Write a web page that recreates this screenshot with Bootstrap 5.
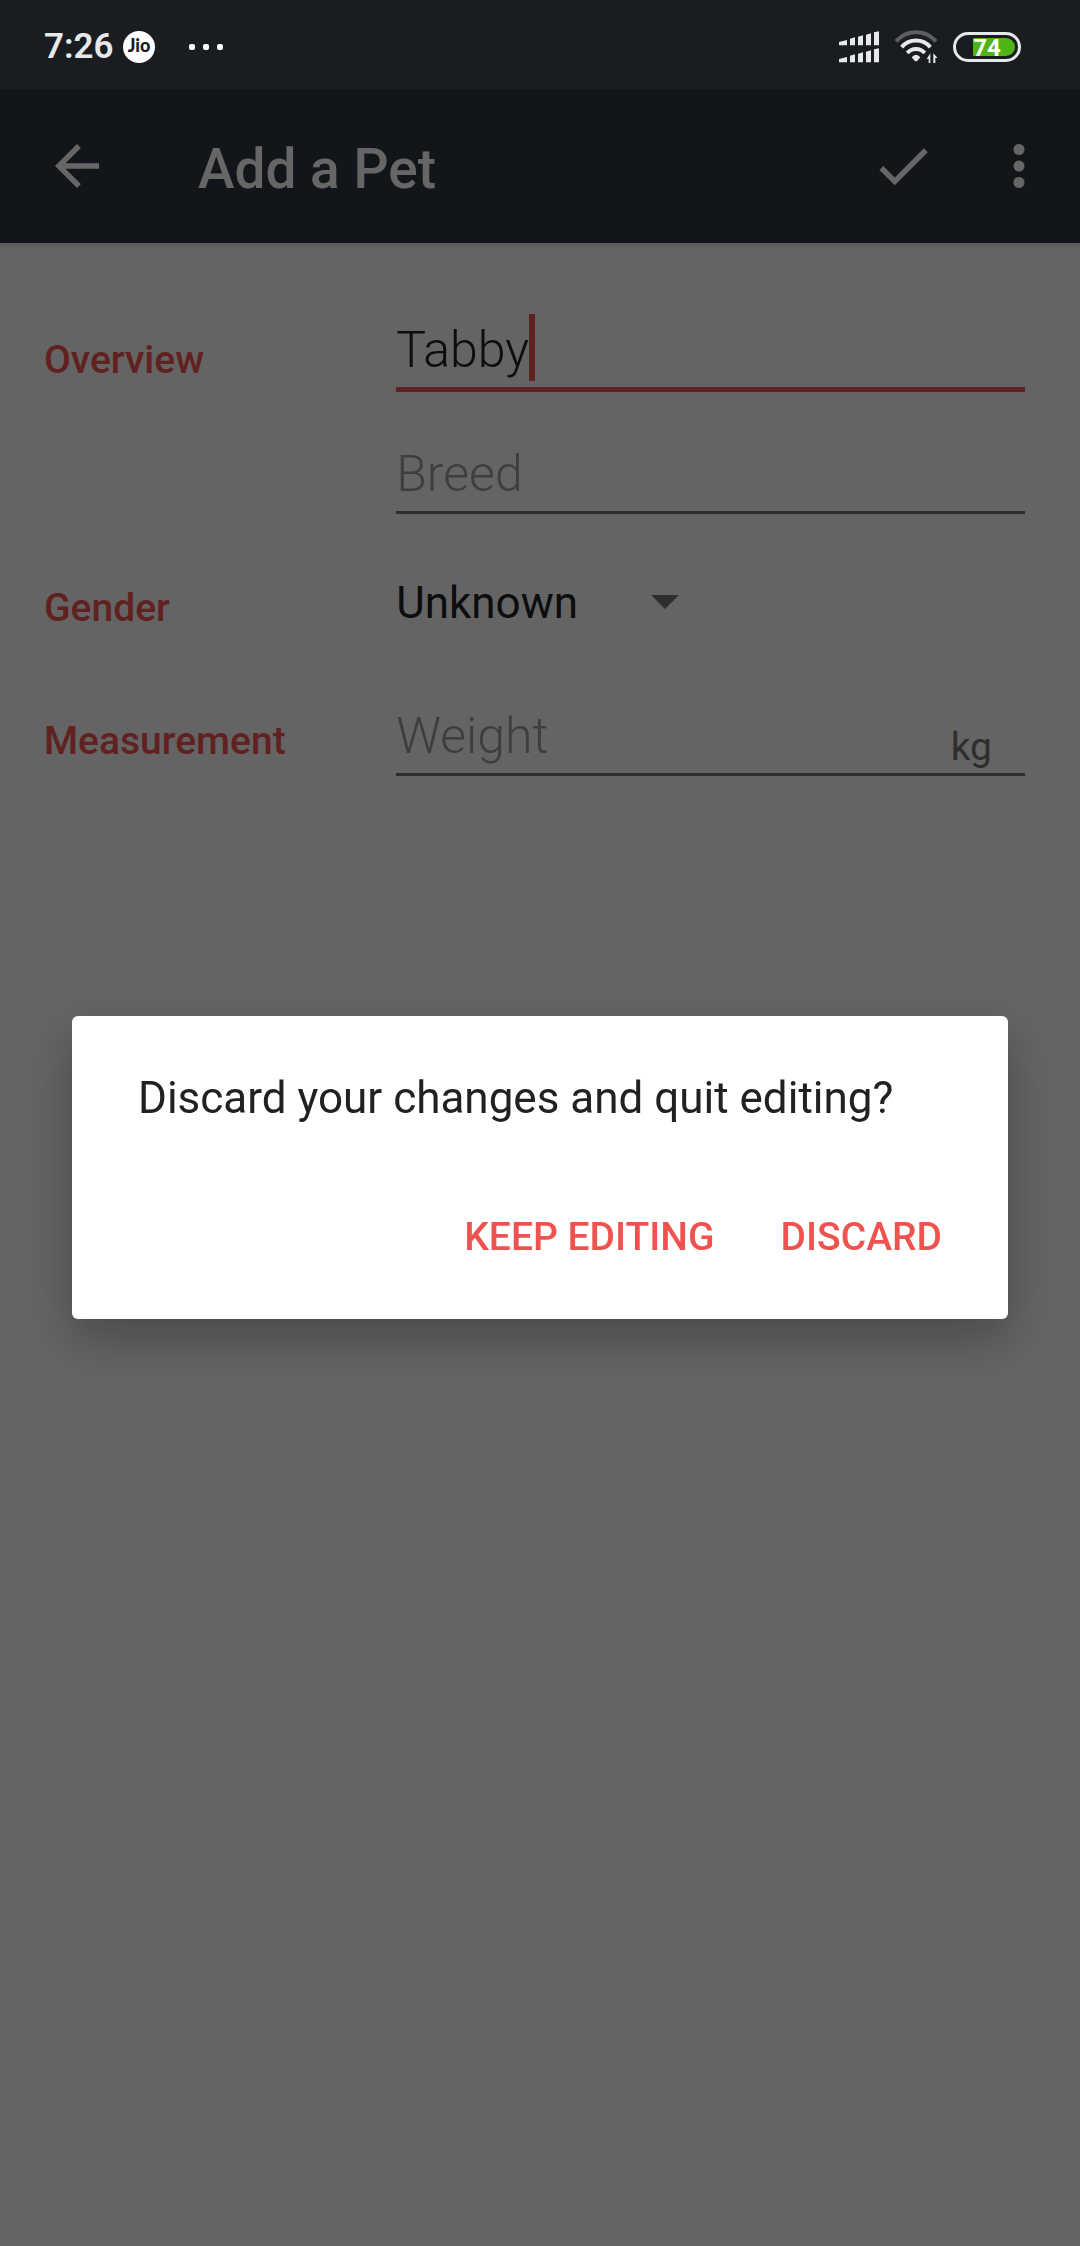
<!DOCTYPE html>
<html lang="en">
<head>
<meta charset="utf-8">
<meta name="viewport" content="width=device-width, initial-scale=1">
<title>Add a Pet</title>
<link href="https://cdn.jsdelivr.net/npm/bootstrap@5.3.0/dist/css/bootstrap.min.css" rel="stylesheet">
<style>
  :root { --accent: #ef5350; --status-h: 89px; }
  body { font-family: Roboto, "Liberation Sans", sans-serif; background: #fafafa; color: #212121; min-height: 100vh; }

  .status-bar { height: var(--status-h); background: #191c21; color: #e8e8e8; padding: 4px 59px 0 44px; }
  .clock { font-size: 35px; line-height: 40px; font-weight: 600; }
  .status-icons { gap: 16px; }

  .app-bar { height: 154px; background: #2d3741; color: #fff; padding: 0 28px 0 44px; box-shadow: 0 2px 6px rgba(0,0,0,.15); }
  .app-title { font-size: 55px; line-height: 66px; font-weight: 500; padding: 5px 0 0 88px; }
  .icon-btn { border: 0; padding: 0; line-height: 0; color: inherit; background: none; }
  .app-actions { gap: 50px; }

  .pet-form { padding: 77px 55px 0 44px; }
  .field-row { display: grid; grid-template-columns: 14fr 25fr; align-items: start; }
  .field-label { font-size: 39px; line-height: 46px; font-weight: 500; color: var(--accent); }
  .label-overview { padding-top: 17px; }
  .label-gender { padding-top: 8px; }
  .label-measure { padding-top: 12px; }
  .row-gender { margin-top: 63px; }
  .row-measure { margin-top: 75px; }
  .line-input { display: block; width: 100%; border: 0; border-bottom: 3px solid #737373; border-radius: 0; background: transparent;
    padding: 0 0 7px; font-size: 50px; line-height: 60px; height: 70px; font-weight: 300; color: #212121; outline: 0; }
  .line-input::placeholder { color: #9c9c9c; opacity: 1; }
  .line-input.active { height: 72px; border-bottom: 5px solid var(--accent); }
  .breed { margin-top: 52px; }
  .text-caret { left: 133px; top: -6px; width: 6px; height: 67px; background: var(--accent); }
  .unit { right: 33px; top: 18px; font-size: 39px; line-height: 46px; color: #737373; }
  .gender-box { width: 283px; }
  .gender-select { appearance: none; width: 100%; height: 52px; border: 0; padding: 0; background: transparent; font-size: 44px; line-height: 52px; color: #212121; }
  .gender-arrow { right: 0; top: 18px; color: #737373; }

  .dim-layer { top: var(--status-h); height: auto; bottom: 0; background: rgba(0,0,0,.6); }
  .dim-layer .modal-dialog { max-width: none; margin: 0 72px; min-height: 100%; }
  .dim-layer .modal-content { border: 0; border-radius: 6px; padding: 56px 44px 33px 66px; box-shadow: 0 20px 50px rgba(0,0,0,.28); }
  .ask { font-size: 44px; line-height: 52px; color: #212121; }
  .choices { gap: 22px; margin-top: 64px; }
  .choice { border: 0; background: none; color: var(--accent); font-size: 39px; line-height: 46px; font-weight: 500; padding: 26px 22px; }
</style>
</head>
<body>
<header class="status-bar d-flex align-items-center justify-content-between">
  <div class="d-flex align-items-center">
    <span class="clock">7:26</span>
    <svg class="ms-2" width="34" height="34" viewBox="0 0 34 34" role="img" aria-label="Jio">
      <circle cx="17" cy="17" r="16" fill="#fff"/>
      <text x="17" y="22" text-anchor="middle" font-family="Lato, sans-serif" font-weight="900" font-size="18" fill="#191c21">Jio</text>
    </svg>
    <svg class="ms-4" width="50" height="12" viewBox="0 0 50 12" fill="#fff" aria-hidden="true">
      <rect x="9" y="3" width="6" height="6" rx="2"/><rect x="23" y="3" width="6" height="6" rx="2"/><rect x="37" y="3" width="6" height="6" rx="2"/>
    </svg>
  </div>
  <div class="status-icons d-flex align-items-center">
    <svg width="40" height="32" viewBox="117 95 120 96" fill="#e8e8e8" aria-hidden="true">
      <path id="bars" d="M117 128l24-6v16h-24zM150 118l15-4v24h-15zM174 112l15-4v30h-15zM198 106l15-4v36h-15zM222 99l15-3v42h-15z"/>
      <use href="#bars" y="51"/>
    </svg>
    <svg width="42" height="34" viewBox="285 95 126 102" fill="none" stroke="#e8e8e8" stroke-width="12" aria-hidden="true">
      <path d="M288 129A79 79 0 0 1 408 129" stroke="#5b5e62"/>
      <path d="M305 147A56 56 0 0 1 391 147"/>
      <path d="M322 164A34 34 0 0 1 374 164"/>
      <path d="M335 177Q348 162 361 177L352 187Q348 190 344 187Z" fill="#e8e8e8" stroke="none"/>
      <path d="M380 182L391 165V194H386V182ZM400 165L413 179H406V194H400Z" fill="#e8e8e8" stroke="none"/>
    </svg>
    <svg width="68" height="30" viewBox="0 0 68 30" role="img" aria-label="Battery 74">
      <rect x="1.5" y="1.5" width="65" height="27" rx="13.5" fill="none" stroke="#e8e8e8" stroke-width="3"/>
      <path d="M21 6H53A9 9 0 0 1 53 24H21Q20 24 20 23V7Q20 6 21 6Z" fill="#4fb517"/>
      <text x="34" y="24" text-anchor="middle" font-family="Roboto, sans-serif" font-weight="700" font-size="24" fill="#fff">74</text>
    </svg>
  </div>
</header>

<nav class="app-bar d-flex align-items-center">
  <button type="button" class="icon-btn" aria-label="Back">
    <svg width="66" height="66" viewBox="0 0 24 24" fill="currentColor"><path d="M20 11H7.830l5.590-5.590L12 4l-8 8 8 8 1.410-1.410L7.830 13H20v-2z"/></svg>
  </button>
  <h1 class="app-title m-0 me-auto">Add a Pet</h1>
  <div class="app-actions d-flex">
    <button type="button" class="icon-btn" aria-label="Save">
      <svg width="66" height="66" viewBox="0 0 24 24" fill="currentColor"><path d="M9 16.170L4.830 12l-1.420 1.410L9 19 21 7l-1.410-1.410z"/></svg>
    </button>
    <button type="button" class="icon-btn" aria-label="More options">
      <svg width="66" height="66" viewBox="0 0 24 24" fill="currentColor"><circle cx="12" cy="6" r="2"/><circle cx="12" cy="12" r="2"/><circle cx="12" cy="18" r="2"/></svg>
    </button>
  </div>
</nav>

<main>
  <form class="pet-form">
    <div class="field-row">
      <label class="field-label label-overview" for="petName">Overview</label>
      <div>
        <div class="position-relative">
          <input class="line-input active" id="petName" type="text" value="Tabby">
          <span class="text-caret position-absolute"></span>
        </div>
        <input class="line-input breed" type="text" placeholder="Breed" aria-label="Breed">
      </div>
    </div>
    <div class="field-row row-gender">
      <label class="field-label label-gender" for="petGender">Gender</label>
      <div class="gender-box position-relative">
        <select class="gender-select" id="petGender"><option>Unknown</option><option>Male</option><option>Female</option></select>
        <svg class="gender-arrow position-absolute pe-none" width="28" height="14" viewBox="0 0 28 14" fill="currentColor" aria-hidden="true"><path d="M0 0h28L14 14z"/></svg>
      </div>
    </div>
    <div class="field-row row-measure">
      <label class="field-label label-measure" for="petWeight">Measurement</label>
      <div class="position-relative">
        <input class="line-input" id="petWeight" type="text" inputmode="numeric" placeholder="Weight">
        <span class="unit position-absolute">kg</span>
      </div>
    </div>
  </form>
</main>

<div class="modal dim-layer show d-block" tabindex="-1" role="dialog" aria-modal="true" aria-labelledby="ask">
  <div class="modal-dialog modal-dialog-centered">
    <div class="modal-content">
      <p class="ask m-0" id="ask">Discard your changes and quit editing?</p>
      <div class="choices d-flex justify-content-end">
        <button type="button" class="choice">KEEP EDITING</button>
        <button type="button" class="choice">DISCARD</button>
      </div>
    </div>
  </div>
</div>
<script src="https://cdn.jsdelivr.net/npm/bootstrap@5.3.0/dist/js/bootstrap.bundle.min.js"></script>
</body>
</html>
